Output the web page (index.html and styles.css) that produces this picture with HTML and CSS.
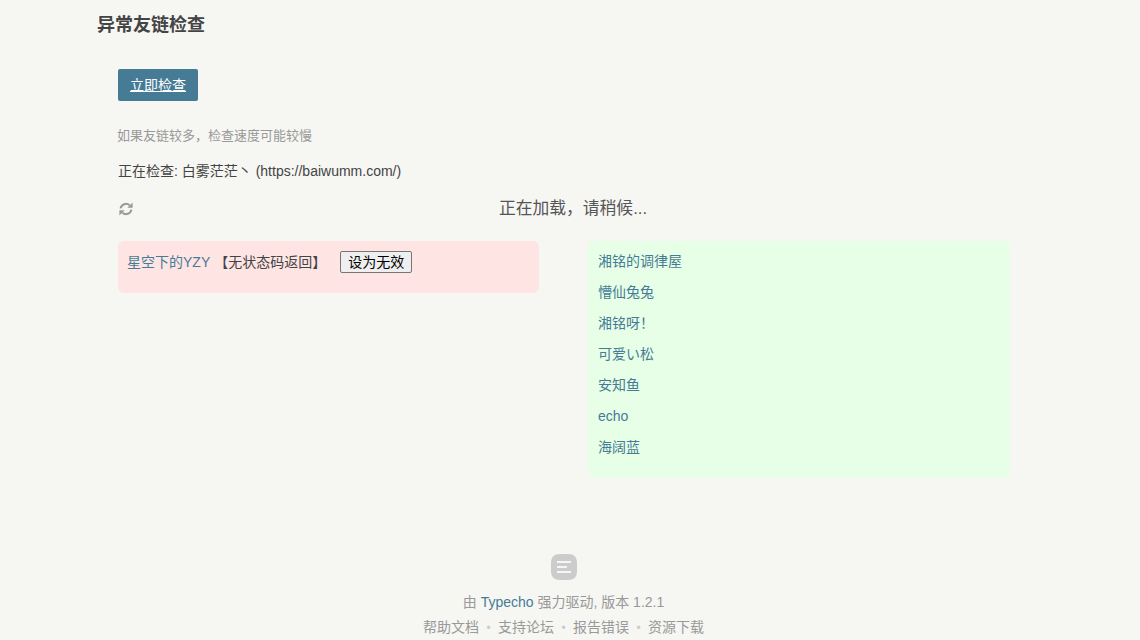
FILE: index.html
```html
<!DOCTYPE html>
<html lang="zh-CN">
<head>
<meta charset="utf-8">
<title>异常友链检查</title>
<link rel="stylesheet" href="styles.css">
</head>
<body>
<div class="page">
  <h2 class="page-title">异常友链检查</h2>
  <main class="content">
    <a class="primary-btn" href="#">立即检查</a>
    <p class="hint">如果友链较多，检查速度可能较慢</p>
    <p class="status">正在检查: 白雾茫茫丶 (https://baiwumm.com/)</p>
    <div class="loading">
      <svg class="spin-icon" viewBox="0 0 16 16" width="16" height="16" aria-hidden="true">
        <path d="M2.600 7.400A5.500 5.500 0 0 1 11.600 4.200" />
        <path d="M13.400 8.600A5.500 5.500 0 0 1 4.400 11.800" />
        <path class="solid" d="M9.400 6.800H14.600V1.600Z" />
        <path class="solid" d="M6.600 9.200H1.400V14.400Z" />
      </svg>
      <span class="loading-text">正在加载，请稍候...</span>
    </div>
    <div class="results">
      <section class="panel panel-bad">
        <div class="bad-row"><a href="#">星空下的YZY</a> <span class="reason">【无状态码返回】</span><button class="mark-btn" type="button">设为无效</button></div>
      </section>
      <section class="panel panel-good">
        <a href="#">湘铭的调律屋</a>
        <a href="#">懵仙兔兔</a>
        <a href="#">湘铭呀！</a>
        <a href="#">可爱い松</a>
        <a href="#">安知鱼</a>
        <a href="#">echo</a>
        <a href="#">海阔蓝</a>
      </section>
    </div>
  </main>
  <footer class="footer">
    <svg class="logo" viewBox="0 0 26 26" width="26" height="26" aria-hidden="true">
      <path class="logo-bg" d="M9 0H17C23 0 26 3 26 9V17C26 23 23 26 17 26H9C3 26 0 23 0 17V9C0 3 3 0 9 0Z" />
      <path class="logo-bar" d="M6 7H20V9H6ZM6 12H16V14H6ZM6 17H20V19H6Z" />
    </svg>
    <p class="powered">由 <a href="#">Typecho</a> 强力驱动, 版本 1.2.1</p>
    <nav class="footer-links">
      <a href="#">帮助文档</a><span class="dot">•</span><a href="#">支持论坛</a><span class="dot">•</span><a href="#">报告错误</a><span class="dot">•</span><a href="#">资源下载</a>
    </nav>
  </footer>
</div>
</body>
</html>
```
FILE: styles.css
```css
* { box-sizing: border-box; }
html, body { margin: 0; padding: 0; }
body {
  background: #f6f6f3;
  color: #444;
  font-family: "Liberation Sans", "Noto Sans CJK SC", sans-serif;
  font-size: 14px;
  line-height: 20px;
  height: 640px;
  overflow: hidden;
}
a { color: #467b96; text-decoration: none; }
.page { width: 1140px; padding: 0 110px 0 98px; }
.page-title {
  margin: 0 0 0 -1px;
  padding-top: 13px;
  font-size: 18px;
  line-height: 24px;
  font-weight: 700;
  color: #444;
}
.content { padding: 32px 20px 0; }
.primary-btn {
  display: block;
  width: 80px;
  height: 32px;
  line-height: 32px;
  text-align: center;
  background: #467b96;
  color: #fff;
  text-decoration: underline;
  border-radius: 2px;
}
.hint { margin: 25px 0 0 -1px; font-size: 13px; line-height: 20px; color: #999; }
.status { margin: 15px 0 0; line-height: 20px; }
.loading {
  display: grid;
  grid-template-columns: 16px 1fr;
  align-items: center;
  margin-top: 16px;
  height: 24px;
}
.spin-icon { fill: none; stroke: #999; stroke-width: 2; }
.spin-icon .solid { fill: #999; stroke: none; }
.loading-text { text-align: center; font-size: 16.800px; color: #555; padding-left: 2px; }
.results {
  display: grid;
  grid-template-columns: 421px 422px;
  gap: 49px;
  align-items: start;
  margin-top: 20px;
}
.panel { border-radius: 6px; padding: 10px; }
.panel-bad { background: #ffe4e4; height: 52px; }
.bad-row { display: flex; align-items: center; height: 22px; }
.bad-row a { margin-left: -1px; }
.reason { margin-left: 4px; }
.mark-btn {
  margin-left: 14px;
  width: 72px;
  height: 22px;
  padding: 0;
  font: inherit;
  line-height: 18px;
  color: #000;
  background: #efefef;
  border: 1px solid #767676;
  border-radius: 2px;
}
.panel-good {
  background: #e6ffe6;
  display: flex;
  flex-direction: column;
  gap: 11px;
  height: 237px;
}
.footer { margin-top: 76px; text-align: center; color: #999; }
.logo { display: block; margin: 0 auto; }
.logo-bg { fill: #ccc; }
.logo-bar { fill: #f6f6f3; }
.powered { margin: 12px 1px 0 0; line-height: 20px; }
.footer-links { margin: 5px 1px 0 0; line-height: 20px; }
.footer-links a { color: #999; }
.dot { display: inline-block; width: 19px; color: #ccc; font-size: 12px; }
```
